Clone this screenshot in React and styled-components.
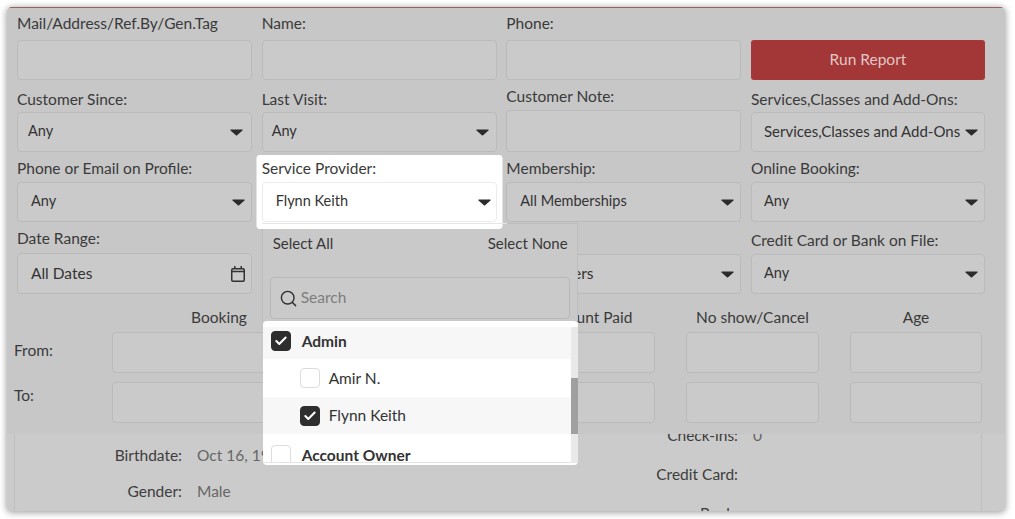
import styled, { createGlobalStyle } from "styled-components";
import { Check, Search } from "lucide-react";

const GlobalStyle = createGlobalStyle`
    html, body {
        margin: 0;
        background: #ffffff;
        font-family: "Lato", "Liberation Sans", sans-serif;
        color: #3a3a3a;
    }
`;

function Caret() {
    return (
        <CaretIcon viewBox="0 0 13 7">
            <path d="M1 0.5h11c.6 0 .9.7.5 1.1L7.1 6.2c-.3.3-.9.3-1.2 0L.5 1.6C.1 1.2.4.5 1 .5z" fill="#2b2b2b" />
        </CaretIcon>
    );
}

function CalendarIcon() {
    return (
        <svg width="16" height="18" viewBox="0 0 16 18" fill="none" stroke="#333333">
            <rect x="1.75" y="3.75" width="12.5" height="12.5" rx="1.2" strokeWidth="1.5" />
            <path d="M2 6.5h12" strokeWidth="1.5" />
            <path d="M4.75 1v3M11.25 1v3" strokeWidth="1.5" />
        </svg>
    );
}

function SelectField({ label, value, gap = 4, pad = 12, caretRight = 8, height = 40, size = 14.5 }) {
    return (
        <Field>
            <Label $gap={gap}>{label}</Label>
            <SelectBox $height={height} $pad={pad} $right={caretRight}>
                <SelectValue $size={size}>{value}</SelectValue>
                <Caret />
            </SelectBox>
        </Field>
    );
}

function TextField({ label, gap = 8, height = 40 }) {
    return (
        <Field>
            <Label $gap={gap}>{label}</Label>
            <TextInput $height={height} />
        </Field>
    );
}

const rangeColumns = ["Booking", "", "Amount Paid", "No show/Cancel", "Age"];

const providers = [
    { name: "Admin", group: true, checked: true, shaded: true, height: 32, lift: 4 },
    { name: "Amir N.", height: 38 },
    { name: "Flynn Keith", checked: true, shaded: true, height: 37 },
    { name: "Account Owner", group: true, height: 42 },
];

function ProviderDropdown() {
    return (
        <Dropdown>
            <DropdownHead>
                <SelectLinks>
                    <span>Select All</span>
                    <span>Select None</span>
                </SelectLinks>
                <SearchBox>
                    <Search size={19} color="#2f2f2f" strokeWidth={1.8} />
                    <SearchInput placeholder="Search" />
                </SearchBox>
            </DropdownHead>
            <ProviderList>
                <ProviderRows>
                    {providers.map((p) => (
                        <ProviderRow key={p.name} $shaded={p.shaded} $group={p.group} $height={p.height} $lift={p.lift}>
                            <Checkbox $checked={p.checked}>
                                {p.checked && <Check size={14} color="#ffffff" strokeWidth={3.5} />}
                            </Checkbox>
                            <span>{p.name}</span>
                        </ProviderRow>
                    ))}
                </ProviderRows>
                <ScrollTrack>
                    <ScrollThumb />
                </ScrollTrack>
            </ProviderList>
        </Dropdown>
    );
}

export default function App() {
    return (
        <>
            <GlobalStyle />
            <Page>
                <Window>
                    <FilterPanel>
                        <FilterGrid>
                            <TextField label="Mail/Address/Ref.By/Gen.Tag" />
                            <TextField label="Name:" />
                            <TextField label="Phone:" />
                            <ButtonCell>
                                <RunButton>Run Report</RunButton>
                            </ButtonCell>

                            <SelectField label="Customer Since:" value="Any" pad={10} />
                            <SelectField label="Last Visit:" value="Any" pad={9} caretRight={7} />
                            <TextField label="Customer Note:" gap={5} height={42} />
                            <SelectField label="Services,Classes and Add-Ons:" value="Services,Classes and Add-Ons" caretRight={6} size={15} />

                            <SelectField label="Phone or Email on Profile:" value="Any" gap={5} pad={13} caretRight={6} />
                            <ProviderCell>
                                <ProviderDropdown />
                                <Spotlight>
                                    <SelectField label="Service Provider:" value="Flynn Keith" gap={5} pad={13} caretRight={5} />
                                </Spotlight>
                            </ProviderCell>
                            <SelectField label="Membership:" value="All Memberships" gap={5} pad={13} caretRight={6} />
                            <SelectField label="Online Booking:" value="Any" gap={5} caretRight={6} />

                            <Field>
                                <Label $gap={6}>Date Range:</Label>
                                <SelectBox $height={41} $pad={13} $right={5}>
                                    <SelectValue $size={15.5}>All Dates</SelectValue>
                                    <CalendarIcon />
                                </SelectBox>
                            </Field>
                            <Field />
                            <SelectField label="" value="Customers" gap={5} pad={13} caretRight={6} size={15.5} />
                            <SelectField label="Credit Card or Bank on File:" value="Any" gap={5} caretRight={6} />
                        </FilterGrid>

                        <RangeGrid>
                            <span />
                            {rangeColumns.map((c, i) => (
                                <RangeHead key={i}>{c}</RangeHead>
                            ))}
                            <RangeLabel $top={9}>From:</RangeLabel>
                            {rangeColumns.map((c, i) => (
                                <RangeInput key={i} />
                            ))}
                            <RangeLabel $top={4}>To:</RangeLabel>
                            {rangeColumns.map((c, i) => (
                                <RangeInput key={i} />
                            ))}
                        </RangeGrid>
                    </FilterPanel>

                    <Details>
                        <InfoColumn $width={400} $labelWidth={167} $top={12} $gap={18}>
                            <InfoLabel>Birthdate:</InfoLabel>
                            <InfoValue>Oct 16, 1990</InfoValue>
                            <InfoLabel>Gender:</InfoLabel>
                            <InfoValue>Male</InfoValue>
                        </InfoColumn>
                        <InfoColumn $labelWidth={323} $top={-8} $gap={21}>
                            <InfoLabel>Check-ins:</InfoLabel>
                            <InfoValue>0</InfoValue>
                            <InfoLabel>Credit Card:</InfoLabel>
                            <InfoValue />
                            <InfoLabel>Bank:</InfoLabel>
                            <InfoValue />
                        </InfoColumn>
                    </Details>
                </Window>
            </Page>
        </>
    );
}

const Page = styled.div`
    padding: 7px 10px 8px 7px;
    box-sizing: border-box;
    height: 519px;
    overflow: hidden;
`;

const Window = styled.div`
    height: 504px;
    border-radius: 5px;
    overflow: hidden;
    background: #cbcbcb;
    box-shadow: 0 1px 6px 1px rgba(0, 0, 0, 0.35);
`;

const FilterPanel = styled.div`
    box-sizing: border-box;
    height: 427px;
    padding: 5px 20px 0 10px;
    background: #c7c7c7;
    border-top: 1px solid #9a5f5f;
`;

const FilterGrid = styled.div`
    display: grid;
    grid-template-columns: 235px 235px 235px 234px;
    grid-template-rows: 66px 65px 63px 65px;
    column-gap: 9.67px;
    row-gap: 7px;
    padding-top: 1px;
`;

const Field = styled.div`
    display: flex;
    flex-direction: column;
    justify-content: flex-end;
    min-width: 0;
`;

const Label = styled.label`
    display: block;
    font-size: 15.5px;
    line-height: 18px;
    min-height: 18px;
    margin-bottom: ${(props) => props.$gap}px;
    white-space: nowrap;
`;

const TextInput = styled.input`
    box-sizing: border-box;
    display: block;
    width: 100%;
    height: ${(props) => props.$height}px;
    background: #cacaca;
    border: 1px solid #bababa;
    border-radius: 4px;
    outline: none;
`;

const SelectBox = styled.div`
    box-sizing: border-box;
    display: flex;
    align-items: center;
    justify-content: space-between;
    height: ${(props) => props.$height}px;
    padding: 0 ${(props) => props.$right}px 0 ${(props) => props.$pad}px;
    background: #cacaca;
    border: 1px solid #bababa;
    border-radius: 4px;
`;

const SelectValue = styled.span`
    font-size: ${(props) => props.$size}px;
    line-height: 18px;
    margin-top: -2px;
    white-space: nowrap;
    color: #333333;
`;

const CaretIcon = styled.svg`
    width: 13px;
    height: 7px;
    flex: none;
`;

const ButtonCell = styled.div`
    display: flex;
    align-items: flex-end;
`;

const RunButton = styled.button`
    width: 100%;
    height: 40px;
    padding: 0 0 2px;
    border: none;
    border-radius: 3px;
    background: #a33636;
    color: #e2c6c6;
    font-family: inherit;
    font-size: 15.5px;
`;

const ProviderCell = styled.div`
    position: relative;
    display: flex;
    flex-direction: column;
    justify-content: flex-end;
`;

const Spotlight = styled.div`
    position: relative;
    z-index: 2;
    background: #ffffff;
    border-radius: 1px;
    box-shadow: 0 1.5px 0 5.5px #ffffff;
    ${SelectBox} {
        background: #ffffff;
        border-color: #ececec;
    }
    &::after {
        content: "";
        position: absolute;
        left: 0;
        right: -10px;
        bottom: -2px;
        height: 1px;
        background: #e6e6e6;
    }
`;

const Dropdown = styled.div`
    position: absolute;
    z-index: 1;
    top: 64px;
    left: 0;
    box-sizing: border-box;
    width: 316px;
    height: 242px;
    display: flex;
    flex-direction: column;
`;

const DropdownHead = styled.div`
    box-sizing: border-box;
    height: 98px;
    padding: 10px 7px 0 7px;
    background: #c9c9c9;
    border: 1px solid #bdbdbd;
    border-bottom: none;
`;

const SelectLinks = styled.div`
    display: flex;
    justify-content: space-between;
    padding: 0 2px 0 3px;
    font-size: 15px;
    line-height: 18px;
    color: #383838;
`;

const SearchBox = styled.div`
    box-sizing: border-box;
    display: flex;
    align-items: center;
    gap: 3px;
    height: 42px;
    margin-top: 25px;
    padding: 0 8px;
    background: #cacaca;
    border: 1px solid #b8b8b8;
    border-radius: 4px;
`;

const SearchInput = styled.input`
    flex: 1;
    min-width: 0;
    border: none;
    outline: none;
    padding: 0 0 2px;
    background: transparent;
    font-family: inherit;
    font-size: 15.5px;
    &::placeholder {
        color: #7d7d7d;
    }
`;

const ProviderList = styled.div`
    position: relative;
    flex: 1;
    margin-left: 1px;
    padding: 6px 0 2px;
    background: #ffffff;
    border-radius: 4px;
    overflow: hidden;
`;

const ProviderRows = styled.div`
    height: 100%;
    overflow: hidden;
    border-bottom: 1px solid #e4e4e4;
    box-sizing: border-box;
`;

const ProviderRow = styled.div`
    box-sizing: border-box;
    display: flex;
    align-items: center;
    gap: ${(props) => (props.$group ? 11 : 9)}px;
    height: ${(props) => props.$height}px;
    padding: 0 0 ${(props) => props.$lift || 0}px ${(props) => (props.$group ? 8 : 37)}px;
    background: ${(props) => (props.$shaded ? "#f7f7f7" : "#ffffff")};
    font-size: 15.5px;
    font-weight: ${(props) => (props.$group ? 700 : 400)};
    color: #333333;
    & > span:last-child {
        margin-top: -1px;
    }
`;

const Checkbox = styled.span`
    box-sizing: border-box;
    flex: none;
    display: flex;
    align-items: center;
    justify-content: center;
    width: 20px;
    height: 20px;
    border-radius: 4px;
    background: ${(props) => (props.$checked ? "#2e2e2e" : "#ffffff")};
    border: 1px solid ${(props) => (props.$checked ? "#2e2e2e" : "#dddddd")};
`;

const ScrollTrack = styled.div`
    position: absolute;
    top: 6px;
    bottom: 2px;
    right: 0;
    width: 7px;
    background: #e9e9e9;
`;

const ScrollThumb = styled.div`
    height: 56px;
    margin-top: 51px;
    background: #a0a0a0;
`;

const RangeGrid = styled.div`
    display: grid;
    grid-template-columns: 67px 214px 134px 133px 133px 132px;
    grid-template-rows: 15px 41px 41px;
    column-gap: 31px;
    row-gap: 9px;
    margin: 14px 0 0 -3px;
`;

const RangeHead = styled.div`
    font-size: 15.5px;
    line-height: 18px;
    text-align: center;
    white-space: nowrap;
`;

const RangeLabel = styled.div`
    font-size: 15.5px;
    line-height: 18px;
    padding-top: ${(props) => props.$top}px;
`;

const RangeInput = styled.input`
    box-sizing: border-box;
    width: 100%;
    height: 41px;
    background: #cacaca;
    border: 1px solid #bababa;
    border-radius: 4px;
    outline: none;
`;

const Details = styled.div`
    display: flex;
    box-sizing: border-box;
    height: 77px;
    margin: 0 23px 0 7px;
    border-left: 1px solid #bfbfbf;
    border-right: 1px solid #bfbfbf;
    overflow: hidden;
`;

const InfoColumn = styled.div`
    display: grid;
    grid-template-columns: ${(props) => props.$labelWidth}px 1fr;
    grid-auto-rows: 18px;
    column-gap: 15px;
    row-gap: ${(props) => props.$gap}px;
    width: ${(props) => (props.$width ? `${props.$width}px` : "auto")};
    margin-top: ${(props) => props.$top}px;
    font-size: 15.5px;
    line-height: 18px;
`;

const InfoLabel = styled.div`
    text-align: right;
    color: #3d3d3d;
`;

const InfoValue = styled.div`
    color: #666666;
`;
